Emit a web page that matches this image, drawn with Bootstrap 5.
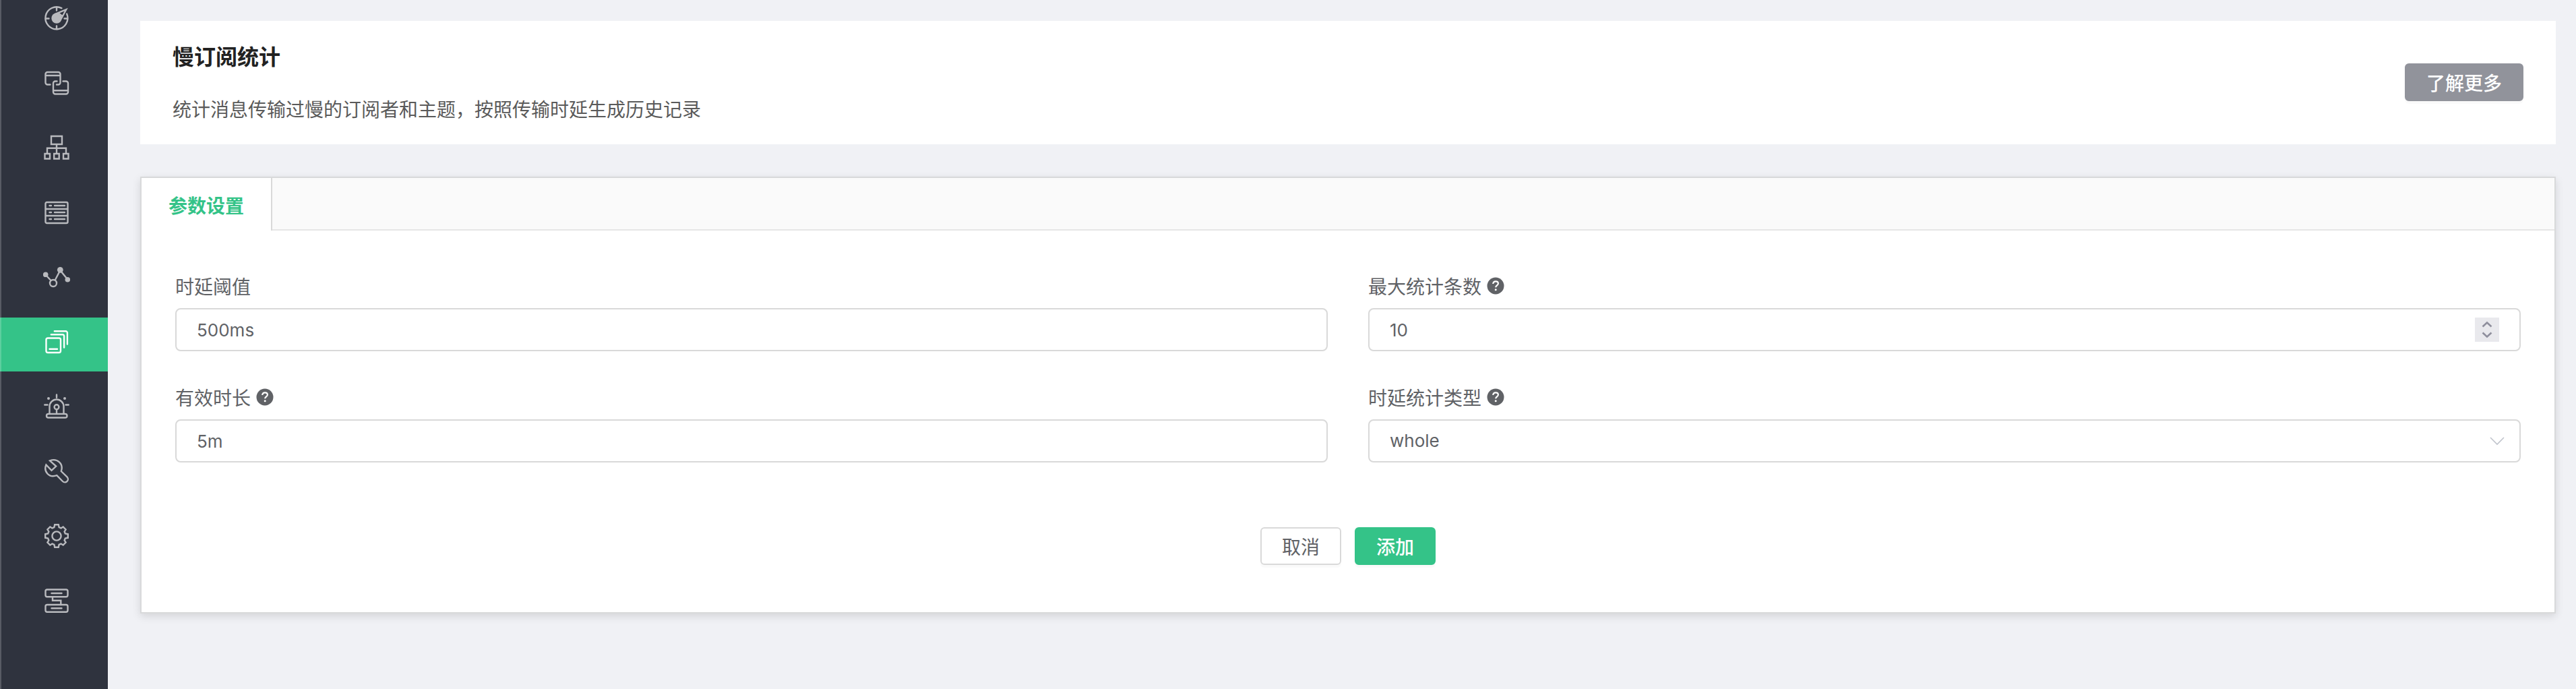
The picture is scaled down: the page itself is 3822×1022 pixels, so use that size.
<!DOCTYPE html>
<html lang="zh-CN">
<head>
<meta charset="utf-8">
<meta name="viewport" content="width=device-width, initial-scale=1">
<title>慢订阅统计</title>
<link href="https://cdn.jsdelivr.net/npm/bootstrap@5.3.0/dist/css/bootstrap.min.css" rel="stylesheet">
<style>
  body { background: #f0f1f5; color: #606266; font: 28px/40px "Noto Sans CJK SC", sans-serif; min-height: 100vh; }
  .app-shell { height: 100vh; overflow: hidden; }
  .side-menu { width: 160px; background: #2f333e; overflow: hidden; }
  .side-menu::before { content: ""; position: absolute; inset: 0 auto 0 0; width: 2px; background: rgba(255,255,255,.2); z-index: 1; }
  .side-list { gap: 16px; margin-top: -9px; }
  .side-link { display: flex; justify-content: center; padding: 16px 0 24px 8px; color: #b9babe; }
  .side-link.active { background: #34c388; color: #fff; }
  .side-link svg { width: 40px; height: 40px; fill: none; stroke: currentColor; stroke-width: 2.4; stroke-linecap: round; }
  .side-link .solid { fill: currentColor; stroke: none; }
  .main-area { padding: 31px 30px 0 48px; }
  .intro { padding: 29px 48px 31px; margin-bottom: 48px; }
  .intro h1 { font-size: 32px; line-height: 44px; font-weight: 700; color: #222; margin-bottom: 35px; }
  .intro p { line-height: 44px; color: #5a5a5a; }
  .ui-btn { --bs-btn-font-size: 28px; --bs-btn-line-height: 40px; --bs-btn-padding-x: 30px; --bs-btn-padding-y: 6px; --bs-btn-border-width: 2px; --bs-btn-border-radius: 6px; box-shadow: 0 4px 0 rgba(0,0,0,.02); }
  .btn-more { --bs-btn-bg: #91939b; --bs-btn-border-color: #91939b; --bs-btn-color: #fff; font-weight: 500; }
  .btn-add { --bs-btn-bg: #34c388; --bs-btn-border-color: #34c388; --bs-btn-color: #fff; font-weight: 500; }
  .btn-cancel { --bs-btn-bg: #fff; --bs-btn-border-color: #d9d9d9; --bs-btn-color: #606266; }
  .panel { background: #fff; border: 2px solid #d8d9da; box-shadow: 0 4px 12px rgba(0,0,0,.12); }
  .tab-strip { background: #fafafa; border-bottom: 2px solid #e6e6e6; }
  .tab-strip .nav-link { padding: 20px 40px 18px; margin-bottom: -2px; background: #fff; color: #34c388; border-right: 2px solid #d9d9d9; font-weight: 700; }
  .param-form { padding: 62px 50px 70px; }
  .param-form .row { --bs-gutter-x: 60px; --bs-gutter-y: 48px; }
  .param-form .form-label { margin-bottom: 13px; gap: 8px; }
  .help { width: 26px; height: 26px; }
  .param-form .form-control, .param-form .form-select { height: 64px; border: 2px solid #d9d9d9; border-radius: 8px; padding: 0 30px; color: #606266; background-color: #fff; font: 26px/40px Inter, "Noto Sans CJK SC", sans-serif; }
  .param-form .form-select { background-image: url("data:image/svg+xml,%3Csvg xmlns='http://www.w3.org/2000/svg' viewBox='0 0 22 14' fill='none' stroke='%23c0c4cc' stroke-width='1.6'%3E%3Cpath d='M1 2l10 10L21 2'/%3E%3C/svg%3E"); background-size: 22px 14px; background-position: right 22px center; }
  .count-input { appearance: textfield; -moz-appearance: textfield; background-repeat: no-repeat; background-position: right 30px center; background-size: 36px 36px; background-image: url("data:image/svg+xml,%3Csvg xmlns='http://www.w3.org/2000/svg' viewBox='0 0 36 36' fill='none' stroke='%238f8f9d' stroke-width='2.6'%3E%3Cpath fill='%23e9e9ed' stroke='none' d='M0 0h36v36H0z'/%3E%3Cpath d='M11.500 13.500l6.500-6 6.500 6M11.500 22.500l6.500 6 6.500-6'/%3E%3C/svg%3E"); }
  .count-input::-webkit-inner-spin-button { appearance: none; -webkit-appearance: none; }
  .form-actions { gap: 20px; margin-top: 96px; }
</style>
</head>
<body>
<div class="app-shell d-flex">
  <nav class="side-menu position-relative flex-shrink-0" aria-label="主菜单">
    <div class="side-list d-flex flex-column">
      <a class="side-link" href="#" aria-label="监控"><svg viewBox="0 0 40 40"><path d="M27.400 5.100A16.500 16.500 0 1 0 35.200 13.600M20 3.500v5M3.500 20.500h5M31.500 20.500h5M20 31.500v5M19 13.400L34.200 7.200 27 20.500M24.300 13.600l4.200 3.400"/><circle class="solid" cx="20" cy="20" r="7.700"/></svg></a>
      <a class="side-link" href="#" aria-label="客户端"><svg viewBox="0 0 40 40"><path d="M10.500 22.500h-4a3 3 0 0 1-3-3V7a3 3 0 0 1 3-3h16a3 3 0 0 1 3 3v12.500a3 3 0 0 1-3 3H20M3.500 9h22M20.500 17.500H18a3 3 0 0 0-3 3v13a3 3 0 0 0 3 3h16a3 3 0 0 0 3-3v-13a3 3 0 0 0-3-3h-4.500M15 31.300h22"/></svg></a>
      <a class="side-link" href="#" aria-label="主题"><svg viewBox="0 0 40 40"><path d="M12 3h16v12H12zM20 15v13M6 28v-7.300h28V28M2.500 29h7.500v7.500H2.500zM16.200 29h7.500v7.500h-7.500zM30 29h7.500v7.500H30z"/></svg></a>
      <a class="side-link" href="#" aria-label="规则引擎"><svg viewBox="0 0 40 40"><rect x="3.500" y="5" width="33" height="31" rx="2"/><path d="M4 15h32M4 25h32M9.500 10H12M17 10h15M9.500 20H12M17 20h15M9.500 30H12M17 30h15"/></svg></a>
      <a class="side-link" href="#" aria-label="统计分析"><svg viewBox="0 0 40 40"><path d="M4 17l7.500 8M17.700 24.500L25.300 10l11 13.500"/><circle cx="15" cy="29" r="5"/><circle class="solid" cx="3.700" cy="16.300" r="3.800"/><circle class="solid" cx="25.300" cy="9.300" r="4.400"/><circle class="solid" cx="36.300" cy="23.700" r="3.800"/></svg></a>
      <a class="side-link active" href="#" aria-label="慢订阅统计" aria-current="page"><svg viewBox="0 0 40 40"><rect x="4.500" y="14.500" width="21.500" height="21.500" rx="2.500"/><path d="M9.500 30.700H21M11.800 9.300h17a2.300 2.300 0 0 1 2.300 2.300v17M16.800 4.300h16.800a2.300 2.300 0 0 1 2.300 2.300v17"/></svg></a>
      <a class="side-link" href="#" aria-label="告警"><svg viewBox="0 0 40 40"><path d="M9.500 30.500V20a10.500 10.500 0 0 1 21 0v10.500M20 24.500v6M20 2.500v4.200M2.300 17.500h4.200M33.500 17.500h4.200"/><rect x="5" y="31" width="30.500" height="5.500" rx="2.700"/><circle cx="20" cy="20.700" r="3.400"/><circle class="solid" cx="8" cy="8" r="2"/><circle class="solid" cx="32" cy="8" r="2"/></svg></a>
      <a class="side-link" href="#" aria-label="工具"><svg viewBox="0 0 40 40"><path d="M10 4.300l9.200 8.300-6.700 6.200-8.100-8.400C.500 20 8 30.500 20.300 26.200L29 35a4.600 4.600 0 0 0 6.700-6.300L26.800 20C30.500 9 21 0 10 4.300z"/></svg></a>
      <a class="side-link" href="#" aria-label="设置"><svg viewBox="-20 -20 40 40"><path d="M-3.600-12.800L-2.800-16.800H2.800L3.600-12.800 6.500-11.600 9.700-13.600 13.600-9.700 11.600-6.500 12.800-3.600 16.800-2.800V2.800L12.800 3.600 11.600 6.500 13.600 9.700 9.700 13.600 6.500 11.600 3.600 12.800 2.800 16.800H-2.800L-3.600 12.800-6.500 11.600-9.700 13.600-13.600 9.700-11.600 6.500-12.800 3.600-16.800 2.800V-2.800L-12.800-3.600-11.600-6.500-13.600-9.700-9.700-13.600-6.500-11.600z"/><circle r="6.600"/></svg></a>
      <a class="side-link" href="#" aria-label="通用"><svg viewBox="0 0 40 40"><rect x="3.500" y="3.500" width="33" height="10.800" rx="2.500"/><rect x="3.500" y="26" width="33" height="10.800" rx="2.500"/><path d="M12.500 9h15M12.500 31.300h15M14 14.500v5.200h12.300V26"/></svg></a>
    </div>
  </nav>
  <main class="main-area flex-grow-1">
    <section class="intro bg-white d-flex align-items-center justify-content-between">
      <div>
        <h1>慢订阅统计</h1>
        <p class="mb-0">统计消息传输过慢的订阅者和主题，按照传输时延生成历史记录</p>
      </div>
      <button type="button" class="btn ui-btn btn-more">了解更多</button>
    </section>
    <section class="panel">
      <div class="nav tab-strip">
        <a class="nav-link active" href="#params" aria-current="true">参数设置</a>
      </div>
      <form class="param-form" id="params">
        <div class="row">
          <div class="col-6">
            <label class="form-label d-flex align-items-center" for="threshold">时延阈值</label>
            <input class="form-control" id="threshold" type="text" value="500ms">
          </div>
          <div class="col-6">
            <label class="form-label d-flex align-items-center" for="count">最大统计条数
              <svg class="help" viewBox="0 0 26 26" aria-hidden="true"><circle cx="13" cy="13" r="12.500" fill="#606266"/><path d="M9.200 10c.2-2.400 1.700-3.700 3.900-3.700 2.300 0 3.800 1.300 3.800 3.300 0 2.700-3.700 2.900-3.700 5.700" fill="none" stroke="#fff" stroke-width="2.200"/><circle cx="13.200" cy="18.800" r="1.500" fill="#fff"/></svg></label>
            <input class="form-control count-input" id="count" type="number" value="10">
          </div>
          <div class="col-6">
            <label class="form-label d-flex align-items-center" for="duration">有效时长
              <svg class="help" viewBox="0 0 26 26" aria-hidden="true"><circle cx="13" cy="13" r="12.500" fill="#606266"/><path d="M9.200 10c.2-2.400 1.700-3.700 3.900-3.700 2.300 0 3.800 1.300 3.800 3.300 0 2.700-3.700 2.900-3.700 5.700" fill="none" stroke="#fff" stroke-width="2.200"/><circle cx="13.200" cy="18.800" r="1.500" fill="#fff"/></svg></label>
            <input class="form-control" id="duration" type="text" value="5m">
          </div>
          <div class="col-6">
            <label class="form-label d-flex align-items-center" for="kind">时延统计类型
              <svg class="help" viewBox="0 0 26 26" aria-hidden="true"><circle cx="13" cy="13" r="12.500" fill="#606266"/><path d="M9.200 10c.2-2.400 1.700-3.700 3.900-3.700 2.300 0 3.800 1.300 3.800 3.300 0 2.700-3.700 2.900-3.700 5.700" fill="none" stroke="#fff" stroke-width="2.200"/><circle cx="13.200" cy="18.800" r="1.500" fill="#fff"/></svg></label>
            <select class="form-select" id="kind"><option selected>whole</option><option>internal</option><option>response</option></select>
          </div>
        </div>
        <div class="form-actions d-flex justify-content-center">
          <button type="button" class="btn ui-btn btn-cancel">取消</button>
          <button type="submit" class="btn ui-btn btn-add">添加</button>
        </div>
      </form>
    </section>
  </main>
</div>
<script src="https://cdn.jsdelivr.net/npm/bootstrap@5.3.0/dist/js/bootstrap.bundle.min.js"></script>
</body>
</html>
